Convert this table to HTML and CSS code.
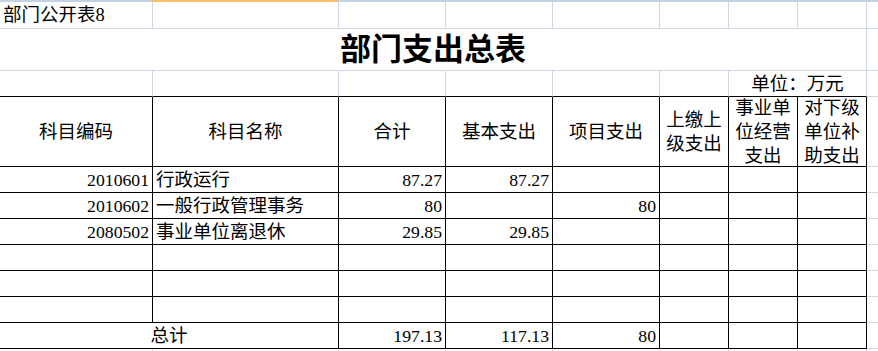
FILE: index.html
```html
<!DOCTYPE html>
<html lang="zh-CN">
<head>
<meta charset="utf-8">
<title>部门支出总表</title>
<link rel="stylesheet" href="styles.css">
</head>
<body>
<div class="strip"></div>
<div class="sheet">
  <!-- row 1 -->
  <div class="c left">部门公开表8</div>
  <div class="c"></div><div class="c"></div><div class="c"></div><div class="c"></div>
  <div class="c"></div><div class="c"></div><div class="c"></div><div class="c last"></div>

  <!-- row 2 -->
  <div class="c title span8">部门支出总表</div>
  <div class="c last"></div>

  <!-- row 3 -->
  <div class="c tb"></div><div class="c tb"></div><div class="c tb"></div><div class="c tb"></div>
  <div class="c tb"></div><div class="c tb"></div>
  <div class="c tb center span2">单位：万元</div>
  <div class="c last"></div>

  <!-- header -->
  <div class="c b center">科目编码</div>
  <div class="c b center">科目名称</div>
  <div class="c b center">合计</div>
  <div class="c b center">基本支出</div>
  <div class="c b center">项目支出</div>
  <div class="c b center wrap">上缴上级支出</div>
  <div class="c b center wrap">事业单位经营支出</div>
  <div class="c b center wrap">对下级单位补助支出</div>
  <div class="c last"></div>

  <!-- data 1 -->
  <div class="c b num">2010601</div>
  <div class="c b left">行政运行</div>
  <div class="c b num">87.27</div>
  <div class="c b num">87.27</div>
  <div class="c b"></div><div class="c b"></div><div class="c b"></div><div class="c b"></div>
  <div class="c last"></div>

  <!-- data 2 -->
  <div class="c b num">2010602</div>
  <div class="c b left">一般行政管理事务</div>
  <div class="c b num">80</div>
  <div class="c b"></div>
  <div class="c b num">80</div>
  <div class="c b"></div><div class="c b"></div><div class="c b"></div>
  <div class="c last"></div>

  <!-- data 3 -->
  <div class="c b num">2080502</div>
  <div class="c b left">事业单位离退休</div>
  <div class="c b num">29.85</div>
  <div class="c b num">29.85</div>
  <div class="c b"></div><div class="c b"></div><div class="c b"></div><div class="c b"></div>
  <div class="c last"></div>

  <!-- empty rows -->
  <div class="c b"></div><div class="c b"></div><div class="c b"></div><div class="c b"></div>
  <div class="c b"></div><div class="c b"></div><div class="c b"></div><div class="c b"></div>
  <div class="c last"></div>

  <div class="c b"></div><div class="c b"></div><div class="c b"></div><div class="c b"></div>
  <div class="c b"></div><div class="c b"></div><div class="c b"></div><div class="c b"></div>
  <div class="c last"></div>

  <div class="c b"></div><div class="c b"></div><div class="c b"></div><div class="c b"></div>
  <div class="c b"></div><div class="c b"></div><div class="c b"></div><div class="c b"></div>
  <div class="c last"></div>

  <!-- total -->
  <div class="c b center span2">总计</div>
  <div class="c b num">197.13</div>
  <div class="c b num">117.13</div>
  <div class="c b num">80</div>
  <div class="c b"></div><div class="c b"></div><div class="c b"></div>
  <div class="c last"></div>

  <!-- trailing row (partly visible) -->
  <div class="c tail"></div><div class="c tail"></div><div class="c tail"></div><div class="c tail"></div>
  <div class="c tail"></div><div class="c tail"></div><div class="c tail"></div><div class="c tail"></div>
  <div class="c tail last"></div>
</div>
</body>
</html>
```

FILE: styles.css
```css
html, body {
  margin: 0;
  padding: 0;
  background: #ffffff;
  overflow: hidden;
}

body {
  width: 878px;
  height: 351px;
  font-family: "Liberation Serif", "Noto Sans CJK SC", serif;
  font-size: 18px;
  color: #000000;
}

.strip {
  height: 2px;
  background: linear-gradient(to right,
    #c4d2e5 0, #c4d2e5 152px,
    #f9c066 152px, #f9c066 338px,
    #c4d2e5 338px, #c4d2e5 100%);
}

.sheet {
  display: grid;
  width: 878px;
  grid-template-columns: 153px 186px 107px 107px 107px 69px 69px 69px 11px;
  grid-template-rows: 27px 42px 26px 70px 26px 26px 26px 26px 26px 26px 26px 2px;
}

.c {
  box-sizing: border-box;
  display: flex;
  align-items: center;
  min-width: 0;
  border-right: 1px solid #d0d7e5;
  border-bottom: 1px solid #d0d7e5;
  line-height: 24px;
  white-space: nowrap;
  font-family: "Liberation Serif", "Noto Sans CJK SC", serif;
}

.c.last {
  border-right: none;
}

.c.tail {
  border-bottom: none;
}

.c.tb {
  border-bottom-color: #000000;
}

.c.b {
  border-right-color: #000000;
  border-bottom-color: #000000;
}

.span8 {
  grid-column: span 8;
}

.span2 {
  grid-column: span 2;
}

.left {
  justify-content: flex-start;
  padding-left: 3px;
  font-size: 18.5px;
}

.center {
  justify-content: center;
  text-align: center;
  font-size: 18.5px;
}

.num {
  justify-content: flex-end;
  padding-right: 3px;
  font-size: 17.7px;
}

.wrap {
  white-space: normal;
  padding: 0 4px;
  line-height: 24px;
}

.title {
  justify-content: center;
  font-size: 31px;
  font-weight: 700;
  line-height: 36px;
}
```
